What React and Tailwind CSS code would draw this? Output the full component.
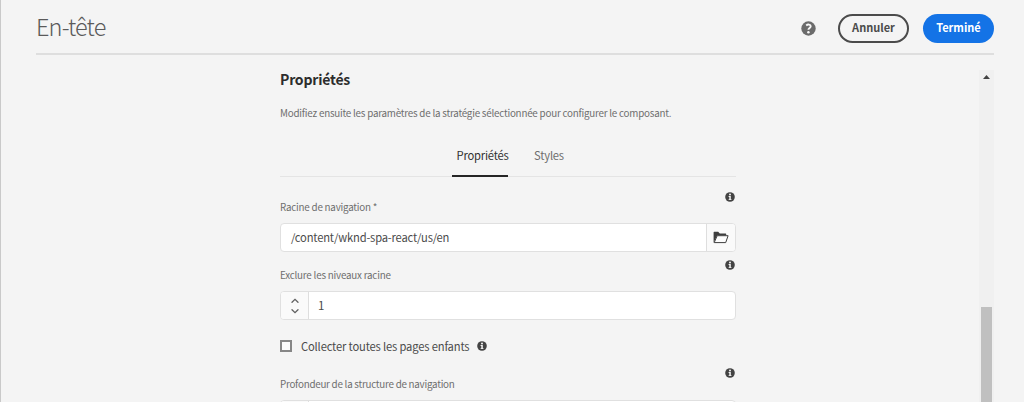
function InfoIcon({ className = "" }) {
  return (
    <svg viewBox="0 0 10 10" className={`size-[10px] shrink-0 ${className}`}>
      <circle cx="5" cy="5" r="4.8" fill="#434343" />
      <circle cx="5" cy="2.5" r="1" fill="#f4f4f4" />
      <path d="M3.6 4.1H5.8V7.2H6.5V8.1H3.6V7.2H4.3V5H3.6Z" fill="#f4f4f4" />
    </svg>
  );
}

function HelpIcon() {
  return (
    <svg viewBox="0 0 15 15" className="size-[15px] shrink-0">
      <circle cx="7.5" cy="7.5" r="7.2" fill="#6b6b6b" />
      <path
        d="M5.2 4.4C6.7 3.2 9.7 3.2 9.7 5.2C9.7 6.9 7.4 6.9 7.4 8.8"
        fill="none"
        stroke="#f8f8f8"
        strokeWidth="1.9"
      />
      <circle cx="7.4" cy="11.2" r="1.25" fill="#f8f8f8" />
    </svg>
  );
}

function FolderIcon() {
  return (
    <svg viewBox="0 0 16 13" className="h-[13px] w-[16px]">
      <path d="M0.6 11.8V1.4Q0.6 0.8 1.2 0.8H5.2L6.8 2.5H12.6Q13.2 2.5 13.2 3.1V4.6H4.2Z" fill="#3e3e3e" />
      <path d="M4.2 4.7H15.1L12.7 11.6H1.2Z" fill="#fdfdfd" stroke="#3e3e3e" strokeWidth="1" strokeLinejoin="round" />
    </svg>
  );
}

function Stepper() {
  return (
    <div className="flex w-[28px] shrink-0 flex-col items-center justify-center rounded-l-[3px] border-r border-[#dedede] bg-[#fafafa]">
      <svg viewBox="0 0 8 16" className="h-4 w-2" fill="none" stroke="#606060" strokeWidth="1.3" strokeLinecap="round">
        <path d="M1 4.2L4 1.3L7 4.2M1 11.8L4 14.7L7 11.8" />
      </svg>
    </div>
  );
}

function NumberField({ value }) {
  return (
    <div className="flex h-[29px] shrink-0 rounded-[4px] border border-[#e0e0e0] bg-white">
      <Stepper />
      <span className="pl-[9px] text-[11.5px] leading-[26px] text-[#4b4b4b]">{value}</span>
    </div>
  );
}

export default function App() {
  return (
    <div className="flex h-[402px] w-[1024px] flex-col overflow-hidden border-l border-[#c9c9c9] bg-[#f4f4f4] pr-[30px] pl-[35px] font-['Noto_Sans_CJK_SC',sans-serif] whitespace-nowrap">
      <header className="flex h-[55px] shrink-0 items-center border-b-2 border-[#dedede] pt-[3px]">
        <h1 className="-mt-[3px] flex-1 text-[23.5px] font-light tracking-[-0.85px] text-[#5a5a5a]">En-tête</h1>
        <HelpIcon />
        <button className="ml-[22px] h-[29px] w-[71px] rounded-full border-2 border-[#4b4b4b] pb-[2px] text-[11px] leading-4 font-bold text-[#4b4b4b]">Annuler</button>
        <button className="ml-[14px] h-[29px] w-[71px] rounded-full bg-[#1473e6] pb-[2px] text-[11px] leading-4 font-bold text-white">Terminé</button>
      </header>
      <div className="flex min-h-0 flex-1 justify-between">
        <main className="ml-[244px] flex w-[456px] flex-col">
          <h2 className="mt-[14px] h-5 text-[14px] leading-5 font-bold tracking-[-0.2px] text-[#2c2c2c]">Propriétés</h2>
          <p className="mt-[16px] h-4 text-[9.8px] leading-4 tracking-[-0.21px] text-[#6e6e6e]">
            Modifiez ensuite les paramètres de la stratégie sélectionnée pour configurer le composant.
          </p>
          <nav className="mt-[24px] flex h-[32px] shrink-0 justify-center border-b border-[#e4e4e4] text-[11.2px] tracking-[-0.2px]">
            <div className="flex h-[32px] w-[56px] shrink-0 justify-center border-b-2 border-[#252525] pl-[5px] leading-[20px] text-[#323232]">Propriétés</div>
            <div className="ml-[26px] leading-[20px] text-[#6e6e6e]">Styles</div>
          </nav>
          <div className="flex h-[46px] shrink-0 justify-between">
            <label className="mt-[22px] h-4 text-[9.8px] leading-4 tracking-[-0.21px] text-[#6e6e6e]">Racine de navigation *</label>
            <InfoIcon className="mt-[15px] mr-px" />
          </div>
          <div className="flex h-[29px] shrink-0 rounded-[4px] border border-[#e0e0e0] bg-white">
            <span className="flex-1 pl-[10px] text-[11.2px] leading-[26px] tracking-[-0.18px] text-[#4b4b4b]">/content/wknd-spa-react/us/en</span>
            <button className="flex w-[29px] items-center justify-center rounded-r-[3px] border-l border-[#dedede] bg-[#fafafa]"><FolderIcon /></button>
          </div>
          <div className="flex h-[39px] shrink-0 justify-between">
            <label className="mt-[15px] h-4 text-[9.8px] leading-4 tracking-[-0.2px] text-[#6e6e6e]">Exclure les niveaux racine</label>
            <InfoIcon className="mt-[8px] mr-px" />
          </div>
          <NumberField value="1" />
          <div className="mt-[18px] flex h-4 shrink-0 items-center">
            <span className="size-3 border-2 border-[#868686] bg-[#fafafa]" />
            <span className="ml-[9px] text-[11.2px] leading-4 tracking-[-0.16px] text-[#4b4b4b]">Collecter toutes les pages enfants</span>
            <InfoIcon className="ml-[8px]" />
          </div>
          <div className="flex h-[46px] shrink-0 justify-between">
            <label className="mt-[22px] h-4 text-[9.8px] leading-4 tracking-[-0.24px] text-[#6e6e6e]">Profondeur de la structure de navigation</label>
            <InfoIcon className="mt-[14px] mr-px" />
          </div>
          <NumberField value="" />
        </main>
        <div className="mt-[15px] flex w-[15px] flex-col items-center bg-[#f0f0f0]">
          <svg viewBox="0 0 7 4" className="mt-[5px] h-1 w-[7px] shrink-0" fill="#424242"><path d="M0 4L3.5 0L7 4Z" /></svg>
          <div className="mt-[228px] w-[11px] flex-1 bg-[#c0c0c0]" />
        </div>
      </div>
    </div>
  );
}
